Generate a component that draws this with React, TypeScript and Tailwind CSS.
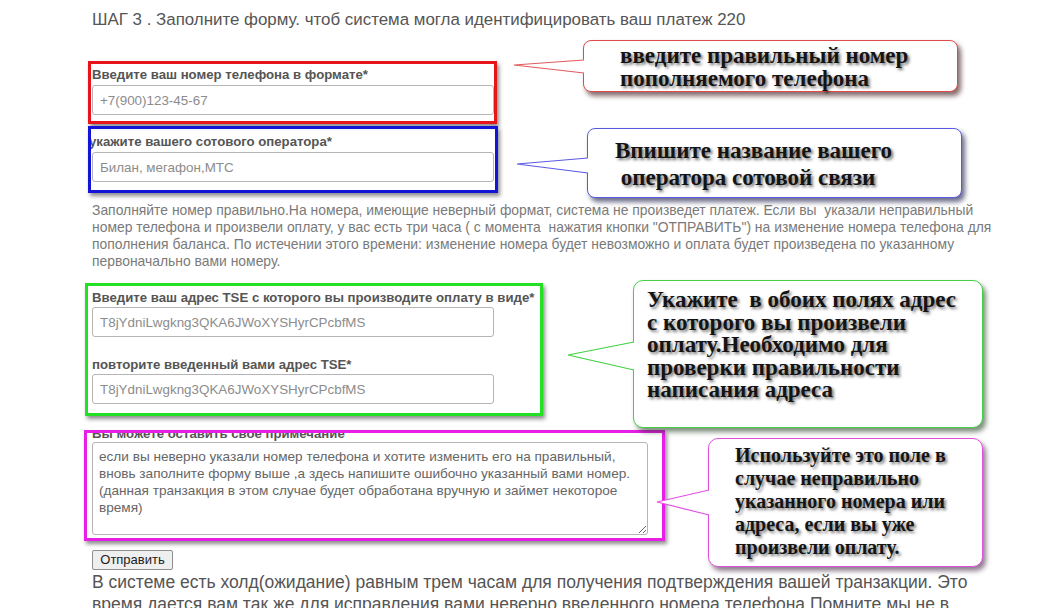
const labelCls = 'whitespace-nowrap text-[13.2px] font-bold leading-[16px] text-[#555]';
const inputCls =
  'block h-[30px] w-[402px] rounded-[3px] border border-[#b5b5b5] bg-white px-[7px] text-[13.4px] text-[#333] outline-none placeholder:text-[#8c8c8c]';
const calloutText =
  "font-['Liberation_Serif','Times_New_Roman',serif] font-bold text-[#141414] [text-shadow:2px_2px_3px_rgba(0,0,0,0.55)]";

const noteText =
  'если вы неверно указали номер телефона и хотите изменить его на правильный,\nвновь заполните форму выше ,а здесь напишите ошибочно указанный вами номер.\n(данная транзакция в этом случае будет обработана вручную и займет некоторое\nвремя)';

function Tails() {
  return (
    <svg className="pointer-events-none absolute left-0 top-0" width="1044" height="608" viewBox="0 0 1044 608">
      <polygon points="514,65 587,59.5 587,73.5" fill="#fff" />
      <polyline points="584,60 514,65 584,73" fill="none" stroke="#e25a5a" strokeWidth="1.2" />
      <polygon points="517,164 591,157.5 591,173.5" fill="#fff" />
      <polyline points="588,158 517,164 588,173" fill="none" stroke="#5a5ae6" strokeWidth="1.2" />
      <polygon points="568,355 637,341.5 637,370.5" fill="#fff" />
      <polyline points="634,342 568,355 634,370" fill="none" stroke="#3fd23f" strokeWidth="1.2" />
      <polygon points="657,502 712,489.5 712,515.5" fill="#fff" />
      <polyline points="709,490 657,502 709,515" fill="none" stroke="#e34fe3" strokeWidth="1.2" />
    </svg>
  );
}

export default function App() {
  return (
    <div className="relative h-[608px] w-full overflow-hidden bg-white font-['Liberation_Sans',Arial,sans-serif] text-[#555]">
      <p className="pl-[92px] pt-[10px] text-[16.9px] leading-[20px] text-[#555]">
        ШАГ 3 . Заполните форму. чтоб система могла идентифицировать ваш платеж 220
      </p>

      {/* phone */}
      <div className="ml-[88px] mt-[31px] w-[409px] overflow-hidden border-[3px] border-[#e8141c] px-px pb-[6px] pt-[3px] shadow-[2px_3px_4px_rgba(0,0,0,0.45)]">
        <div className={labelCls}>Введите ваш номер телефона в формате*</div>
        <input className={`${inputCls} mt-[2px]`} placeholder="+7(900)123-45-67" />
      </div>

      {/* operator */}
      <div className="ml-[88px] mt-[2px] w-[410px] overflow-hidden border-[3px] border-[#1414d8] pb-[8px] pt-[5px] shadow-[2px_3px_4px_rgba(0,0,0,0.45)]">
        <div className={`${labelCls} -ml-[2px]`}>укажите вашего сотового оператора*</div>
        <input className={`${inputCls} ml-px mt-[2px]`} placeholder="Билан, мегафон,МТС" />
      </div>

      <div className="mt-[9px] pl-[92px] text-[13.9px] leading-[17px] text-[#7a7a7a]">
        <div className="whitespace-nowrap">
          Заполняйте номер правильно.На номера, имеющие неверный формат, система не произведет платеж. Если вы&nbsp; указали неправильный
        </div>
        <div className="whitespace-nowrap">
          номер телефона и произвели оплату, у вас есть три часа ( с момента&nbsp; нажатия кнопки "ОТПРАВИТЬ") на изменение номера телефона для
        </div>
        <div className="whitespace-nowrap">
          пополнения баланса. По истечении этого времени: изменение номера будет невозможно и оплата будет произведена по указанному
        </div>
        <div className="whitespace-nowrap">первоначально вами номеру.</div>
      </div>

      {/* TSE address */}
      <div className="ml-[85px] mt-[13px] w-[458px] overflow-hidden border-[3px] border-[#22e022] pb-[9px] pl-[4px] pt-[4px] shadow-[2px_3px_4px_rgba(0,0,0,0.45)]">
        <div className={labelCls}>Введите ваш адрес TSE с которого вы производите оплату в виде*</div>
        <input className={`${inputCls} mt-px`} placeholder="T8jYdniLwgkng3QKA6JWoXYSHyrCPcbfMS" />
        <div className={`${labelCls} mt-[20px]`}>повторите введенный вами адрес TSE*</div>
        <input className={`${inputCls} mt-px`} placeholder="T8jYdniLwgkng3QKA6JWoXYSHyrCPcbfMS" />
      </div>

      {/* note */}
      <div className="ml-[84px] mt-[14px] w-[581px] overflow-hidden border-[3px] border-[#e61ee6] pb-[3px] pl-[5px] shadow-[2px_3px_4px_rgba(0,0,0,0.45)]">
        <div className={`${labelCls} -mt-[7px]`}>Вы можете оставить свое примечание</div>
        <textarea
          readOnly
          defaultValue={noteText}
          className="block h-[93px] w-[556px] rounded-[3px] border border-[#b5b5b5] bg-white px-[6px] py-[5px] text-[13.6px] leading-[17px] text-[#666] outline-none"
        />
      </div>

      <button
        type="button"
        className="ml-[92px] mt-[9px] block h-[20px] w-[81px] rounded-[2px] border border-[#8f8f8f] bg-[#efefef] text-[13px] leading-[18px] text-[#222]"
      >
        Отправить
      </button>

      <div className="mt-px pl-[92px] text-[17.5px] leading-[22px] text-[#555]">
        <div className="whitespace-nowrap">
          В системе есть холд(ожидание) равным трем часам для получения подтверждения вашей транзакции. Это
        </div>
        <div className="whitespace-nowrap">
          время дается вам так же для исправления вами неверно введенного номера телефона.Помните мы не в
        </div>
      </div>

      {/* callouts */}
      <div className="absolute left-[583px] top-[40px] h-[52px] w-[375px] rounded-[8px] border-[1.5px] border-[#e04a4a] bg-white pl-[36px] pt-[3px] shadow-[3px_4px_5px_rgba(50,10,10,0.6)]">
        <div className={`${calloutText} text-[23px] leading-[23px]`}>
          введите правильный номер
          <br />
          пополняемого телефона
        </div>
      </div>

      <div className="absolute left-[587px] top-[128px] h-[70px] w-[375px] rounded-[8px] border-[1.5px] border-[#5a5ae0] bg-white pl-[27px] pt-[8px] shadow-[3px_4px_5px_rgba(10,10,60,0.6)]">
        <div className={`${calloutText} whitespace-pre text-[23px] leading-[27px]`}>
          {'Впишите название вашего\n оператора сотовой связи'}
        </div>
      </div>

      <div className="absolute left-[633px] top-[280px] h-[148px] w-[350px] rounded-[10px] border-[1.5px] border-[#45d045] bg-white pl-[13px] pt-[8px] shadow-[3px_4px_5px_rgba(20,50,20,0.55)]">
        <div className={`${calloutText} whitespace-pre text-[23px] leading-[22.5px]`}>
          {'Укажите  в обоих полях адрес\nс которого вы произвели\nоплату.Необходимо для\nпроверки правильности\nнаписания адреса'}
        </div>
      </div>

      <div className="absolute left-[708px] top-[438px] h-[129px] w-[275px] rounded-[10px] border-[1.5px] border-[#e050e0] bg-white pl-[26px] pt-[5px] shadow-[3px_4px_5px_rgba(50,20,50,0.55)]">
        <div className={`${calloutText} whitespace-pre text-[20px] leading-[23px]`}>
          {'Используйте это поле в\nслучае неправильно\nуказанного номера или\nадреса, если вы уже\nпроизвели оплату.'}
        </div>
      </div>

      <Tails />
    </div>
  );
}
